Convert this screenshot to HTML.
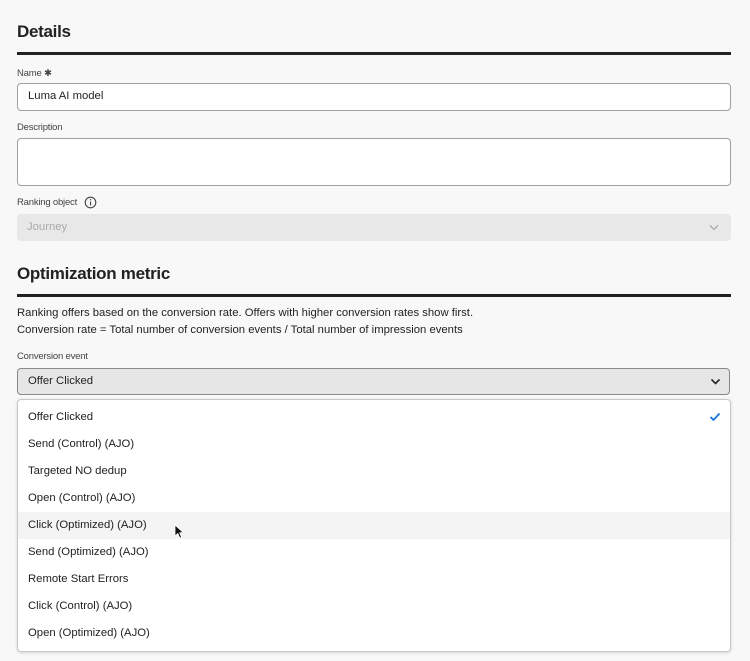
<!DOCTYPE html>
<html><head><style>
body{margin:0;width:750px;height:661px;background:#f8f8f8;font-family:"Liberation Sans",sans-serif;color:#222;position:relative;overflow:hidden}
.a{position:absolute}
h2{position:absolute;margin:0;font-size:17px;font-weight:bold;color:#222;left:17px;letter-spacing:-0.3px}
.rule{position:absolute;left:17px;width:714px;height:3px;background:#222}
.lbl{position:absolute;left:17px;font-size:9.5px;color:#444;letter-spacing:-0.2px}
.box{position:absolute;left:17px;width:712px;border:1px solid #a0a0a0;border-radius:4px;background:#fff;box-sizing:content-box}
.txt{font-size:11.3px;color:#222}
.it{position:absolute;left:0;width:712px;height:27px;line-height:27px;padding-left:10px;font-size:11.3px;color:#222;box-sizing:border-box}
</style></head><body>
<h2 style="top:22px">Details</h2>
<div class="rule" style="top:52px"></div>
<div class="lbl" style="top:68px">Name ✱</div>
<div class="box" style="top:83px;height:26px"><span class="a txt" style="left:10px;top:6px">Luma AI model</span></div>
<div class="lbl" style="top:122px">Description</div>
<div class="box" style="top:138px;height:46px"></div>
<div class="lbl" style="top:197px">Ranking object</div>
<svg class="a" style="left:84px;top:196px" width="13" height="13" viewBox="0 0 13 13"><circle cx="6.5" cy="6.5" r="5.3" fill="none" stroke="#444" stroke-width="1.1"/><rect x="6" y="5.5" width="1.1" height="4" fill="#444"/><circle cx="6.5" cy="3.8" r=".7" fill="#444"/></svg>
<div class="a" style="left:17px;top:214px;width:714px;height:27px;background:#e8e8e8;border-radius:4px"><span class="a" style="left:10px;top:7px;font-size:11.3px;color:#aaa">Journey</span>
<svg class="a" style="left:692px;top:10px" width="10" height="7"><path d="M1 1.5L5 5.5L9 1.5" fill="none" stroke="#aaa" stroke-width="1.3"/></svg></div>
<h2 style="top:264px">Optimization metric</h2>
<div class="rule" style="top:294px"></div>
<div class="a" style="left:17px;top:305px;font-size:11.3px;line-height:17px;color:#222">Ranking offers based on the conversion rate. Offers with higher conversion rates show first.<br>Conversion rate = Total number of conversion events / Total number of impression events</div>
<div class="lbl" style="top:351px">Conversion event</div>
<div class="a" style="left:17px;top:368px;width:711px;height:25px;border:1px solid #888;border-radius:4px;background:#e6e6e6"><span class="a txt" style="left:10px;top:6px">Offer Clicked</span>
<svg class="a" style="left:692px;top:9px" width="11" height="8"><path d="M1.5 1.5L5.5 5.5L9.5 1.5" fill="none" stroke="#222" stroke-width="1.6"/></svg></div>
<div class="a" style="left:17px;top:399px;width:712px;height:251px;border:1px solid #c8c8c8;border-radius:4px;background:#fff;box-shadow:0 1px 3px rgba(0,0,0,.15)">
<div class="it" style="top:4px">Offer Clicked</div>
<svg class="a" style="left:691px;top:12px" width="12" height="10"><path d="M1.5 5L4.5 8L10.5 1.5" fill="none" stroke="#1473e6" stroke-width="1.8"/></svg>
<div class="it" style="top:31px">Send (Control) (AJO)</div>
<div class="it" style="top:58px">Targeted NO dedup</div>
<div class="it" style="top:85px">Open (Control) (AJO)</div>
<div class="it" style="top:112px;background:#f4f4f4">Click (Optimized) (AJO)</div>
<div class="it" style="top:139px">Send (Optimized) (AJO)</div>
<div class="it" style="top:166px">Remote Start Errors</div>
<div class="it" style="top:193px">Click (Control) (AJO)</div>
<div class="it" style="top:220px">Open (Optimized) (AJO)</div>
</div>
<svg class="a" style="left:174px;top:524px" width="10" height="15"><path d="M1 1L1 12L3.8 9.5L5.8 14L7.6 13.2L5.7 8.8L9.2 8.5Z" fill="#111" stroke="#fff" stroke-width=".8"/></svg>
</body></html>
